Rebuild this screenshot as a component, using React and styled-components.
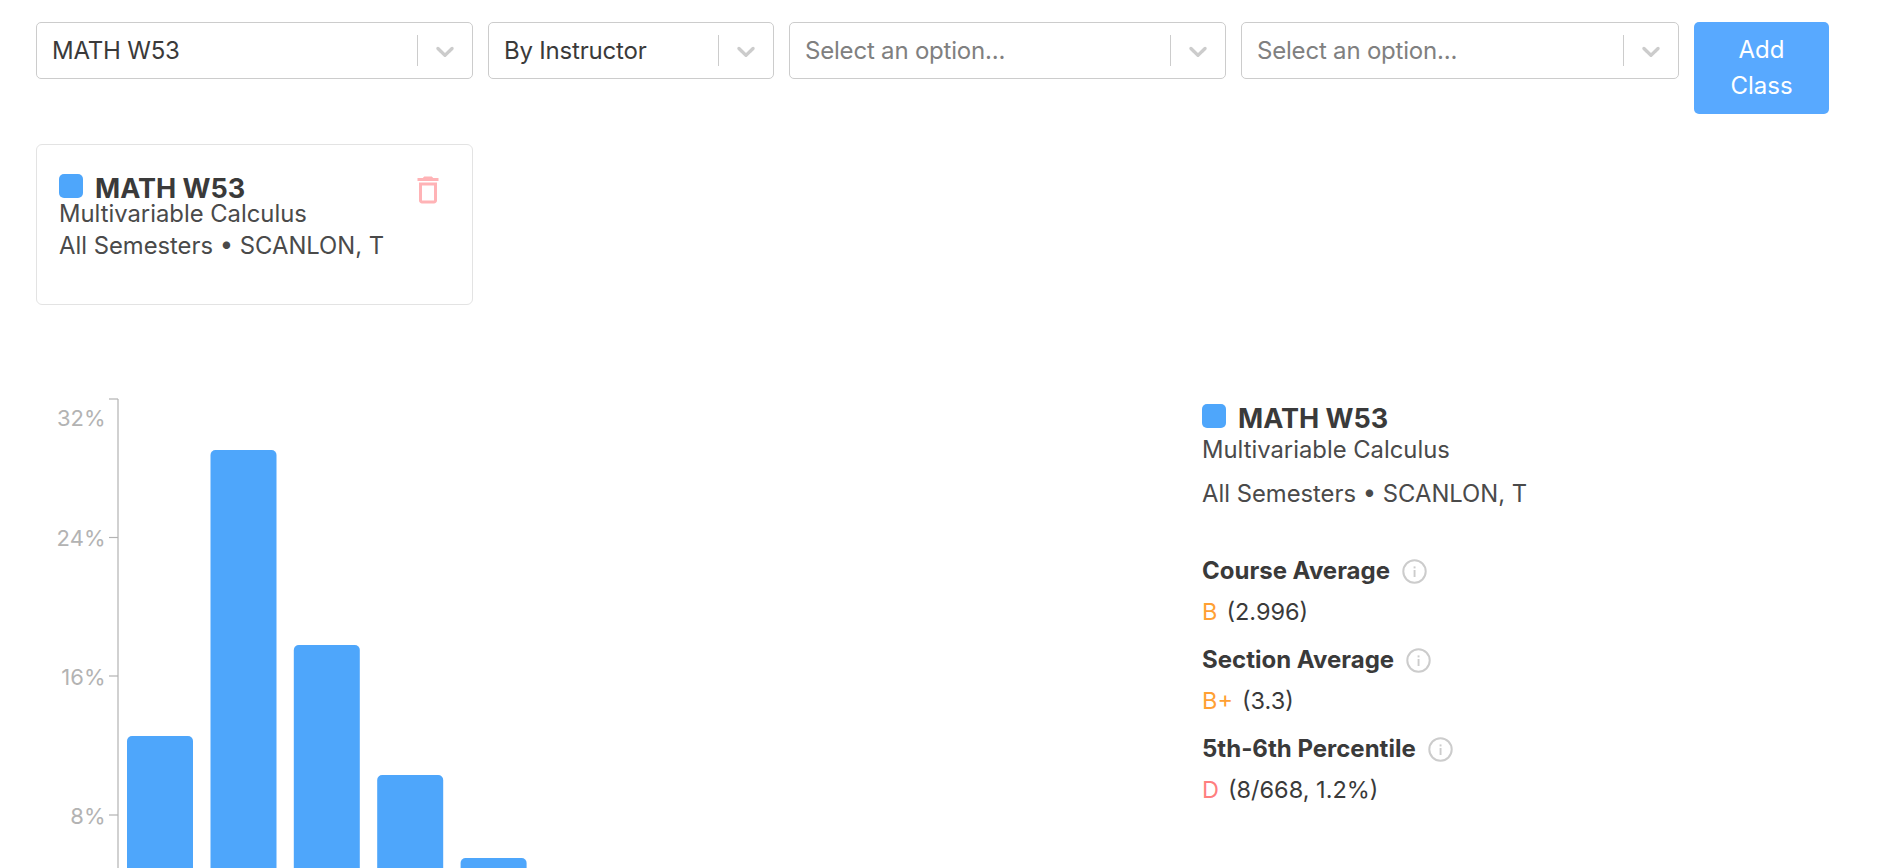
import React from "react";
import styled, { createGlobalStyle } from "styled-components";

const Global = createGlobalStyle`
  html, body { margin: 0; padding: 0; background: #fff; height: 100%; overflow: hidden; }
  body { font-family: Inter, "Noto Sans", sans-serif; color: #3a3a3a; }
`;

const BLUE = "#4EA6FB";

const Page = styled.div`
  padding: 22px 56px 0 36px;
  height: 868px;
  box-sizing: border-box;
  overflow: hidden;
`;
const Toolbar = styled.div`
  display: flex;
  align-items: flex-start;
  gap: 15px;
`;
const Select = styled.div`
  flex: 0 0 ${(p) => p.$width}px;
  box-sizing: border-box;
  height: 57px;
  display: flex;
  align-items: center;
  border: 1px solid #ccc;
  border-radius: 5px;
  background: #fff;
  padding-left: 15px;
`;
const SelectValue = styled.div`
  flex: 1;
  font-size: 24px;
  letter-spacing: -0.2px;
  color: ${(p) => (p.$placeholder ? "#808080" : "#3a3a3a")};
  white-space: nowrap;
  overflow: hidden;
`;
const Separator = styled.span`
  width: 1px;
  height: 31px;
  background: #ccc;
`;
const Chevron = styled.svg`
  width: 30px;
  height: 30px;
  margin: 0 12px;
  fill: #ccc;
  flex: none;
`;
const AddButton = styled.button`
  flex: 0 0 135px;
  height: 92px;
  border: 0;
  border-radius: 5px;
  background: #58a9ff;
  color: #fff;
  font: 400 24px/36px Inter, sans-serif;
  padding: 5px 30px;
`;
const Card = styled.div`
  position: relative;
  box-sizing: border-box;
  width: 437px;
  height: 161px;
  margin-top: 30px;
  padding: 29px 22px;
  border: 1px solid #e3e3e3;
  border-radius: 6px;
`;
const TitleRow = styled.div`
  display: flex;
  align-items: center;
  gap: 12px;
  height: 24px;
`;
const Swatch = styled.span`
  flex: none;
  width: 24px;
  height: 24px;
  border-radius: 5px;
  background: ${BLUE};
`;
const Title = styled.span`
  font-size: 27px;
  font-weight: 700;
  line-height: 24px;
  padding-top: 6px;
  color: #3a3a3a;
`;
const CardLine = styled.div`
  font-size: 23.8px;
  line-height: 32px;
  color: #4a4a4a;
  &:first-of-type { margin-top: 19px; }
`;
const Trash = styled.svg`
  position: absolute;
  right: 26px;
  top: 27px;
  width: 36px;
  height: 36px;
  fill: #ffb3b6;
`;
const ChartRow = styled.div`
  display: flex;
  margin-top: 85px;
`;
const ChartBox = styled.svg`
  flex: 0 0 1166px;
  width: 1166px;
  height: 478px;
  display: block;
`;
const Info = styled.div`
  padding-top: 14px;
`;
const InfoLine = styled.div`
  font-size: 23.8px;
  line-height: 43.5px;
  color: #4a4a4a;
  &:first-of-type { margin-top: 15px; }
`;
const StatList = styled.div`
  margin-top: 35px;
`;
const Stat = styled.div`
  margin-bottom: 7px;
`;
const StatTitle = styled.div`
  display: flex;
  align-items: center;
  gap: 12px;
  font-size: 24px;
  font-weight: 700;
  line-height: 41px;
  color: #3a3a3a;
`;
const InfoIcon = styled.svg`
  width: 25px;
  height: 25px;
  flex: none;
  margin-top: 2px;
`;
const StatValue = styled.div`
  font-size: 23.5px;
  line-height: 41px;
  color: #3a3a3a;
`;
const Grade = styled.span`
  color: ${(p) => p.$color};
  margin-right: 9px;
`;

const ChevronIcon = () => (
  <Chevron viewBox="0 0 20 20">
    <path d="M4.516 7.548c0.436-0.446 1.043-0.481 1.576 0l3.908 3.747 3.908-3.747c0.533-0.481 1.141-0.446 1.574 0 0.436 0.445 0.408 1.197 0 1.615-0.406 0.418-4.695 4.502-4.695 4.502-0.217 0.223-0.502 0.335-0.787 0.335s-0.57-0.112-0.789-0.335c0 0-4.287-4.084-4.695-4.502s-0.436-1.17 0-1.615z" />
  </Chevron>
);

const Dropdown = ({ width, value, placeholder }) => (
  <Select $width={width}>
    <SelectValue $placeholder={!value}>{value || placeholder}</SelectValue>
    <Separator />
    <ChevronIcon />
  </Select>
);

const Tip = () => (
  <InfoIcon viewBox="0 0 25 25">
    <circle cx="12.5" cy="12.5" r="11.2" fill="none" stroke="#ccc" strokeWidth="2" />
    <rect x="11.6" y="11" width="1.9" height="7" fill="#ccc" />
    <rect x="11.6" y="7.4" width="1.9" height="2" fill="#ccc" />
  </InfoIcon>
);

const ticks = [
  { label: "32%", tick: 399, text: 418 },
  { label: "24%", tick: 537.5, text: 538.5 },
  { label: "16%", tick: 676, text: 677 },
  { label: "8%", tick: 815, text: 816 },
];
const bars = [
  { x: 127, top: 736 },
  { x: 210.5, top: 450 },
  { x: 293.8, top: 645 },
  { x: 377.2, top: 775 },
  { x: 460.6, top: 858 },
];

const Chart = () => (
  <ChartBox viewBox="36 390 1166 478">
    <path d="M118 399V868" stroke="#b3b3b3" strokeWidth="1.2" fill="none" />
    {ticks.map((t) => (
      <g key={t.label}>
        <path d={`M109 ${t.tick}H118`} stroke="#b3b3b3" strokeWidth="1.2" />
        <text x="105.5" y={t.text} dy="0.36em" textAnchor="end" fontSize="22" fill="#b3b3b3">
          {t.label}
        </text>
      </g>
    ))}
    {bars.map((b) => (
      <path
        key={b.x}
        d={`M${b.x} 880V${b.top + 5}a5 5 0 0 1 5-5h56a5 5 0 0 1 5 5V880z`}
        fill={BLUE}
      />
    ))}
  </ChartBox>
);

const stats = [
  { title: "Course Average", grade: "B", color: "#ffa033", value: "(2.996)" },
  { title: "Section Average", grade: "B+", color: "#ffa033", value: "(3.3)" },
  { title: "5th-6th Percentile", grade: "D", color: "#ff7f7f", value: "(8/668, 1.2%)" },
];

export default function App() {
  return (
    <Page>
      <Global />
      <Toolbar>
        <Dropdown width={437} value="MATH W53" />
        <Dropdown width={286} value="By Instructor" />
        <Dropdown width={437} placeholder="Select an option..." />
        <Dropdown width={438} placeholder="Select an option..." />
        <AddButton>Add Class</AddButton>
      </Toolbar>
      <Card>
        <TitleRow>
          <Swatch />
          <Title>MATH W53</Title>
        </TitleRow>
        <CardLine>Multivariable Calculus</CardLine>
        <CardLine>All Semesters • SCANLON, T</CardLine>
        <Trash viewBox="0 0 24 24">
          <path d="M6 19c0 1.1.9 2 2 2h8c1.1 0 2-.9 2-2V7H6v12zM8 9h8v10H8V9zm7.5-5l-1-1h-5l-1 1H5v2h14V4z" />
        </Trash>
      </Card>
      <ChartRow>
        <Chart />
        <Info>
          <TitleRow>
            <Swatch />
            <Title>MATH W53</Title>
          </TitleRow>
          <InfoLine>Multivariable Calculus</InfoLine>
          <InfoLine>All Semesters • SCANLON, T</InfoLine>
          <StatList>
            {stats.map((s) => (
              <Stat key={s.title}>
                <StatTitle>
                  {s.title}
                  <Tip />
                </StatTitle>
                <StatValue>
                  <Grade $color={s.color}>{s.grade}</Grade>
                  {s.value}
                </StatValue>
              </Stat>
            ))}
          </StatList>
        </Info>
      </ChartRow>
    </Page>
  );
}
